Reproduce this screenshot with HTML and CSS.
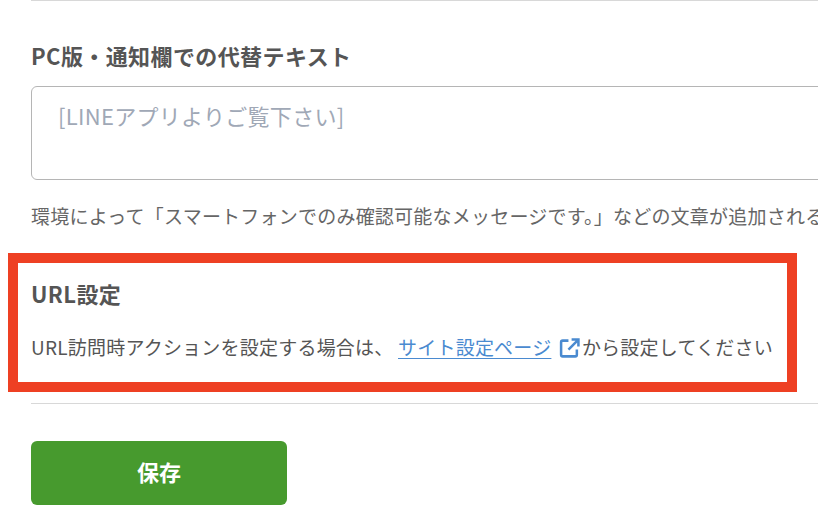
FILE: index.html
```html
<!DOCTYPE html>
<html lang="ja">

<head>
    <meta charset="UTF-8">
    <title>URL設定</title>
    <link rel="stylesheet" href="styles.css">
</head>

<body>
    <div class="form">
        <hr class="rule">

        <h2 class="alt-title">PC版・通知欄での代替テキスト</h2>
        <div class="alt-box">[LINEアプリよりご覧下さい]</div>
        <p class="hint">環境によって「スマートフォンでのみ確認可能なメッセージです。」などの文章が追加される</p>

        <div class="url-section">
            <h2 class="url-title">URL設定</h2>
            <p class="url-text">URL訪問時アクションを設定する場合は、 <a href="#">サイト設定ページ</a>
                <svg class="ext-icon" viewBox="0 0 20 20" width="21" height="21">
                    <path d="M9 2.5H3.5a1.500 1.500 0 0 0-1.500 1.500v12a1.500 1.500 0 0 0 1.500 1.500h12a1.500 1.500 0 0 0 1.500-1.500V11" fill="none" stroke="#4a8ad0" stroke-width="2.400"/>
                    <path d="M12 1.500h6.500V8M18 2l-9 9" fill="none" stroke="#4a8ad0" stroke-width="2.400"/>
                </svg>から設定してください
            </p>
        </div>

        <hr class="rule rule-bottom">

        <button class="save">保存</button>
    </div>
</body>

</html>
```

FILE: styles.css
```css
html,
body {
    margin: 0;
    height: 518px;
    overflow: hidden;
    background-color: #fff;
}

body {
    font-family: "Noto Sans CJK JP", "Noto Sans", sans-serif;
    color: #555;
}

.form {
    width: 1000px;
    padding-left: 31px;
}

.rule {
    margin: 0;
    border: 0;
    border-top: 1px solid #d8d8d8;
}

.alt-title {
    margin: 37px 0 0;
    font-size: 22px;
    line-height: 34px;
    font-weight: 700;
    letter-spacing: 0.4px;
}

.alt-box {
    box-sizing: border-box;
    margin-top: 14px;
    height: 94px;
    padding: 11px 26px;
    border: 1px solid #b5b5b5;
    border-radius: 6px;
    font-size: 22px;
    line-height: 34px;
    letter-spacing: 0.3px;
    color: #a0a8b6;
}

.hint {
    margin: 21px 0 0;
    font-size: 19px;
    line-height: 30px;
    letter-spacing: 0.22px;
    color: #666;
    white-space: nowrap;
}

.url-section {
    box-sizing: border-box;
    width: 789px;
    height: 139px;
    margin: 22px 0 0 -23px;
    padding: 13px 13px 0;
    border: 10px solid #ee4023;
}

.url-title {
    margin: 0;
    font-size: 22px;
    line-height: 34px;
    font-weight: 700;
    letter-spacing: 0.4px;
}

.url-text {
    margin: 22px 0 0;
    font-size: 19px;
    line-height: 30px;
    letter-spacing: 0.22px;
    white-space: nowrap;
}

.url-text a {
    color: #4a8ad0;
    text-underline-offset: 3px;
}

.ext-icon {
    vertical-align: -4px;
    margin: 0 2px 0 3px;
}

.rule-bottom {
    margin-top: 11px;
}

.save {
    display: block;
    width: 256px;
    height: 64px;
    margin-top: 37px;
    padding: 0 0 4px;
    border: 0;
    border-radius: 6px;
    background-color: #479a2e;
    color: #fff;
    font-family: inherit;
    font-size: 22px;
    font-weight: 700;
}
```
